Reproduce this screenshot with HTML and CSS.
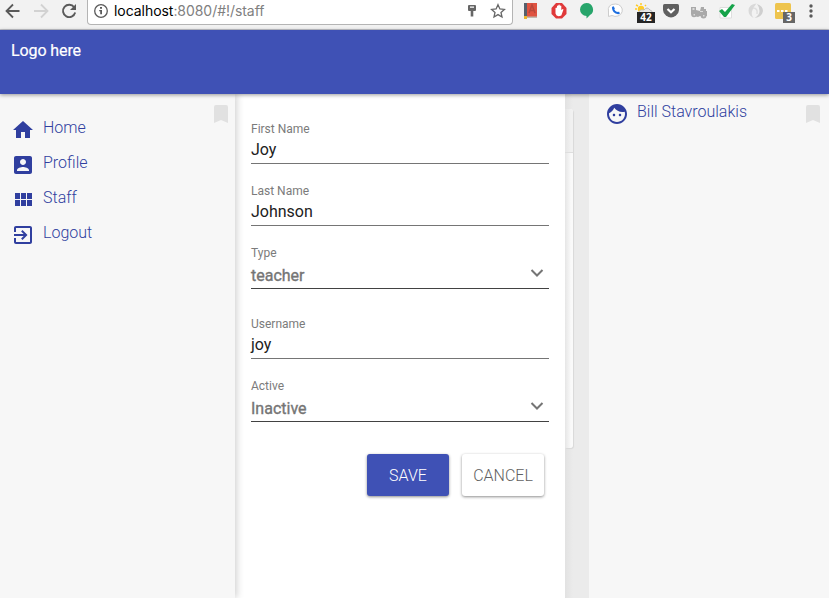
FILE: index.html
```html
<!DOCTYPE html>
<html lang="en">
<head>
<meta charset="utf-8">
<title>Staff</title>
<link rel="stylesheet" href="styles.css">
</head>
<body>
<div class="browser">
  <div class="nav">
    <svg width="16" height="16" viewBox="0 0 16 16" fill="none" stroke="#5a5a5a" stroke-width="1.800"><path d="M14.500 8H2M8 1.500L1.500 8L8 14.500"/></svg>
    <svg width="16" height="16" viewBox="0 0 16 16" fill="none" stroke="#d2d2d2" stroke-width="1.800"><path d="M1 8H14M8 1.500L14.500 8L8 14.500"/></svg>
    <svg width="16" height="16" viewBox="0 0 16 16" fill="none" stroke="#5a5a5a" stroke-width="1.900"><path d="M13.200 4.200A6.200 6.200 0 1 0 14.200 9.500"/><path d="M15 1V7H9Z" fill="#5a5a5a" stroke="none"/></svg>
  </div>
  <div class="address">
    <svg width="16" height="16" viewBox="0 0 16 16"><circle cx="8" cy="8" r="6.300" fill="none" stroke="#5a5a5a" stroke-width="1.300"/><path d="M7 4h2v1.700H7zM6.200 7H9v4.300H7.200V8.200h-1z" fill="#5a5a5a"/></svg>
    <span class="url"><b>localhost</b>:8080/#!/staff</span>
    <svg class="key" width="10" height="14" viewBox="0 0 10 14" fill="#666"><path fill-rule="evenodd" d="M2 1h6q1 0 1 1v4q0 1-1 1H6.300v5.500H3.700V7H2Q1 7 1 6V2q0-1 1-1zM3 2.600h4v1.200H3z"/></svg>
    <svg width="16" height="16" viewBox="0 0 16 16" fill="none" stroke="#666" stroke-width="1.300"><path d="M8 1.700l1.900 4.200 4.500.5-3.400 3 1 4.600L8 11.600 4 14l1-4.600-3.400-3 4.500-.5z"/></svg>
  </div>
  <div class="extensions">
    <svg viewBox="0 0 28 24"><path d="M7 3h13v14H7z" fill="#df5341"/><path d="M7 3h3v14H7z" fill="#56606c"/><path d="M8 16.500h12V18H8z" fill="#bfb7ad"/><path d="M7 16h3v3H7z" fill="#e8b52f"/><path d="M12 13l3-8L18 13M13 10.500h4" stroke="#b9483b" stroke-width="1.500" fill="none"/></svg>
    <svg viewBox="0 0 28 24"><path d="M11 3h6l4.500 5v6L17 18.500h-6L6.500 14V8z" fill="#e0393a"/><path d="M10.500 8q1-1 1.500 0V6q1-1 1.300 0V5q1-1 1.500 0v1q1-1 1.500 0v4l1.500-1q1 0 .5 1l-2 5.500q-4.800 2-5.800-2z" fill="#fff"/></svg>
    <svg viewBox="0 0 28 24"><path d="M13.500 3a6.500 6.500 0 0 1 3.500 12L13.500 18.500v-2.500A6.500 6.500 0 0 1 13.500 3z" fill="#27a56b"/></svg>
    <svg viewBox="0 0 28 24"><path d="M14.500 4a6.800 6.200 0 1 1-3.500 11.500L7.500 16.500V12Q6 4 14.500 4z" fill="#fff" stroke="#cdcdcd"/><path d="M12 7.500q0 5 5.500 5.800" stroke="#1e6fe0" stroke-width="2" fill="none"/><path d="M10.800 7l2-.7 1 2.500-1.500 1zM15.500 12l2.700-.3.700 2-2 .6z" fill="#1e6fe0"/></svg>
    <div class="badged">
      <svg viewBox="0 0 28 24"><circle cx="12" cy="9" r="3.200" fill="#ffcb24"/><path d="M12 3v2M7 5l2 1M6 9h2M17 5l-1 1" stroke="#ffcb24" stroke-width="1.500"/><path d="M10 13q0-4 5-3 3-4 6 0 3 1 2 3z" fill="#e6e6e6" stroke="#bbb"/></svg>
      <span class="badge">42</span>
    </div>
    <svg viewBox="0 0 28 24"><path d="M7.500 4h13q1.500 0 1.500 1.500V10q0 3-3 5.500-5 4-10 0Q6 13 6 10V5.500Q6 4 7.500 4z" fill="#606060"/><path d="M10.500 9L14 12.300 17.500 9" fill="none" stroke="#fff" stroke-width="2.200"/></svg>
    <svg viewBox="0 0 28 24" fill="#a9a9a9"><path d="M6 7h5v3l4 1 1-4h3v2h2v2h1v5h-7l-2 1-4-1-3-2z"/><circle cx="9" cy="14.500" r="2.800"/><circle cx="18.500" cy="15.500" r="3"/><path d="M7.500 8h2v2h-2zM8.500 14h1.500v1.500H8.500zM18 15h1.500v1.500H18zM15 11h3v1h-3z" fill="#dcdcdc"/></svg>
    <svg viewBox="0 0 28 24"><path d="M7 7.500h11.500V18H7z" fill="#fff" stroke="#dedede"/><path d="M6 11l3-2 3 3 7-8 3 1-9 12h-2z" fill="#16a34a"/></svg>
    <svg viewBox="0 0 28 24" fill="none"><path d="M15.500 3.500Q8 4 7.500 10.500q0 5 5 7.500-3-4-1-8 1-3 4-6.500z" fill="#d9d9d9"/><path d="M16 4q6 2 6 7-1 6-8.500 7 5-3 5-7 0-4-2.500-7z" fill="#cfcfcf"/><path d="M12 8q5 0 4 6" stroke="#dedede" stroke-width="1.500"/></svg>
    <div class="badged">
      <svg viewBox="0 0 28 24"><rect x="6" y="3" width="16" height="16" rx="1.500" fill="#eec44d"/><path d="M8 10h2.500v2H8zM12 10h2.500v2H12zM16 10h2.500v2H16z" fill="#fff"/></svg>
      <span class="badge badge-gray">3</span>
    </div>
    <svg viewBox="0 0 28 24" fill="#5a5a5a"><circle cx="14" cy="6" r="1.700"/><circle cx="14" cy="11" r="1.700"/><circle cx="14" cy="16" r="1.700"/></svg>
  </div>
</div>
<header class="toolbar">Logo here</header>
<div class="layout">
  <nav class="sidebar">
    <ul class="menu">
      <li><svg viewBox="0 0 24 24"><path d="M10 20v-6h4v6h5v-8h3L12 3 2 12h3v8z"/></svg><a>Home</a></li>
      <li><svg viewBox="0 0 24 24"><path d="M3 5v14c0 1.100.89 2 2 2h14c1.100 0 2-.9 2-2V5c0-1.100-.9-2-2-2H5c-1.110 0-2 .9-2 2zm12 4c0 1.660-1.340 3-3 3s-3-1.340-3-3 1.340-3 3-3 3 1.340 3 3zm-9 8c0-2 4-3.100 6-3.100s6 1.100 6 3.100v1H6v-1z"/></svg><a>Profile</a></li>
      <li><svg viewBox="0 0 24 24"><path d="M4 11h5V5H4v6zm0 7h5v-6H4v6zm6 0h5v-6h-5v6zm6 0h5v-6h-5v6zm-6-7h5V5h-5v6zm6-6v6h5V5h-5z"/></svg><a>Staff</a></li>
      <li><svg viewBox="0 0 24 24"><path d="M10.090 15.590L11.500 17l5-5-5-5-1.410 1.410L12.670 11H3v2h9.670l-2.580 2.590zM19 3H5c-1.110 0-2 .9-2 2v4h2V5h14v14H5v-4H3v4c0 1.100.89 2 2 2h14c1.100 0 2-.9 2-2V5c0-1.100-.9-2-2-2z"/></svg><a>Logout</a></li>
    </ul>
    <svg class="bookmark" viewBox="0 0 14 18"><path d="M2 0h10q2 0 2 2v16l-7-3-7 3V2q0-2 2-2z"/></svg>
  </nav>
  <main class="content">
    <div class="field"><label>First Name</label><div class="value">Joy</div></div>
    <div class="field"><label>Last Name</label><div class="value">Johnson</div></div>
    <div class="field select"><label>Type</label><div class="value">teacher<svg viewBox="0 0 14 10"><path d="M1.500 2L7 7.500 12.500 2"/></svg></div></div>
    <div class="field"><label>Username</label><div class="value">joy</div></div>
    <div class="field select"><label>Active</label><div class="value">Inactive<svg viewBox="0 0 14 10"><path d="M1.500 2L7 7.500 12.500 2"/></svg></div></div>
    <div class="actions"><button class="save">SAVE</button><button class="cancel">CANCEL</button></div>
  </main>
  <div class="gutter"><div class="card-edge"><div class="card-head"></div></div></div>
  <aside class="userbar">
    <svg class="face" viewBox="0 0 24 24"><path d="M9 11.750c-.69 0-1.250.56-1.250 1.250s.56 1.250 1.250 1.250 1.250-.56 1.250-1.250-.56-1.250-1.250-1.250zm6 0c-.69 0-1.250.56-1.250 1.250s.56 1.250 1.250 1.250 1.250-.56 1.250-1.250-.56-1.250-1.250-1.250zM12 2C6.480 2 2 6.480 2 12s4.480 10 10 10 10-4.480 10-10S17.520 2 12 2zm0 18c-4.410 0-8-3.590-8-8 0-.29.020-.58.050-.86 2.360-1.050 4.230-2.980 5.210-5.370C11.070 8.330 14.050 10 17.420 10c.78 0 1.530-.09 2.250-.26.210.71.330 1.470.33 2.260 0 4.410-3.590 8-8 8z"/></svg>
    <a>Bill Stavroulakis</a>
    <svg class="bookmark" viewBox="0 0 14 18"><path d="M2 0h10q2 0 2 2v16l-7-3-7 3V2q0-2 2-2z"/></svg>
  </aside>
</div>
</body>
</html>
```
FILE: styles.css
```css
* { box-sizing: border-box; }
body {
  margin: 0;
  height: 598px;
  overflow: hidden;
  display: flex;
  flex-direction: column;
  font-family: Roboto, sans-serif;
  font-size: 16px;
  background: #ebebeb;
}
svg { display: block; flex: none; }

.browser {
  height: 30px;
  flex: none;
  display: flex;
  background: #f2f2f2;
  border-bottom: 1px solid #c3c4ca;
}
.nav { width: 87px; padding: 3px 0 0 5px; display: flex; gap: 12px; }
.address {
  width: 426px;
  height: 25px;
  padding: 0 6px 3px 5px;
  display: flex;
  align-items: center;
  background: #fff;
  border: 1px solid #b4b4b4;
  border-top: 0;
  border-radius: 0 0 4px 4px;
}
.url {
  flex: 1;
  margin-left: 5px;
  font: 14px/20px Inter, sans-serif;
  letter-spacing: -.05px;
  color: #808080;
}
.url b { font-weight: 400; color: #000; }
.key { margin-right: 13px; }
.extensions { display: flex; margin-left: 4px; }
.extensions svg { width: 28px; height: 24px; }
.badged { position: relative; }
.badge {
  position: absolute;
  left: 8px;
  top: 12px;
  width: 18px;
  height: 11px;
  background: #252525;
  color: #fff;
  font: bold 10px/11px "Open Sans", sans-serif;
  text-align: center;
}
.badge-gray { left: 14px; width: 12px; background: #666; }

.toolbar {
  height: 64px;
  flex: none;
  padding: 10px 11px;
  background: #3f51b5;
  color: #fff;
  line-height: 21px;
  -webkit-text-stroke: .2px #fff;
  letter-spacing: -.1px;
  position: relative;
  z-index: 2;
  box-shadow: 0 1px 4px rgba(0, 0, 0, .4);
}
.layout { flex: 1; display: flex; min-height: 0; }

.sidebar {
  width: 235px;
  flex: none;
  display: flex;
  justify-content: space-between;
  padding: 11px 6px 0 11px;
  background: #f7f7f7;
  box-shadow: 2px 0 7px rgba(0, 0, 0, .18);
  z-index: 1;
}
.menu { list-style: none; margin: 5px 0 0; padding: 0; }
.menu li { height: 35px; display: flex; color: #303f9f; font-weight: 300; line-height: 35px; }
.menu svg { width: 24px; height: 24px; margin: 8px 8px 0 0; fill: #303f9f; }
.bookmark { width: 14px; height: 18px; margin-right: 1px; fill: #e1e1e1; }

.content { width: 330px; flex: none; padding: 26px 16px 0; background: #fff; }
.field { height: 62px; color: #212121; }
.field label { display: block; font-size: 12px; line-height: 18px; color: #7b7b7b; }
.value {
  height: 26px;
  display: flex;
  justify-content: space-between;
  line-height: 24px;
  border-bottom: 1px solid #757575;
}
.select { height: 71px; }
.select .value { height: 27px; line-height: 27px; color: #757575; border-color: #424242; -webkit-text-stroke: .35px #757575; }
.select .value svg { width: 14px; height: 10px; margin: 6px 5px 0 0; fill: none; stroke: #757575; stroke-width: 2; }
.actions { display: flex; gap: 13px; justify-content: flex-end; margin-top: 6px; padding-right: 5px; }
button {
  width: 82px;
  height: 42px;
  padding: 0;
  border: 0;
  border-radius: 3px;
  font: 300 16px Roboto, sans-serif;
  box-shadow: 0 1px 3px rgba(0, 0, 0, .45);
}
.save { background: #3f51b5; color: #fff; }
.cancel { background: #fff; color: #616161; }

.gutter { width: 24px; flex: none; padding-top: 15px; background: linear-gradient(90deg, #e2e2e2, #ebebeb 8px); }
.card-edge {
  width: 8px;
  height: 339px;
  overflow: hidden;
  border-radius: 0 3px 3px 0;
  background: linear-gradient(90deg, #e6e6e6, #fafafa 6px);
  box-shadow: 1px 1px 1px #d9d9d9;
}
.card-head { height: 44px; background: linear-gradient(90deg, #e6e6e6, #f1f1f1 6px); border-bottom: 1px solid #dedede; }

.userbar { flex: 1; display: flex; padding: 7px 9px 0 16px; background: #f7f7f7; color: #303f9f; font-weight: 300; }
.userbar a { flex: 1; line-height: 22px; margin-left: 8px; }
.face { width: 24px; height: 24px; margin-top: 1px; fill: #303f9f; }
.userbar .bookmark { margin: 4px 0 0; }
```
